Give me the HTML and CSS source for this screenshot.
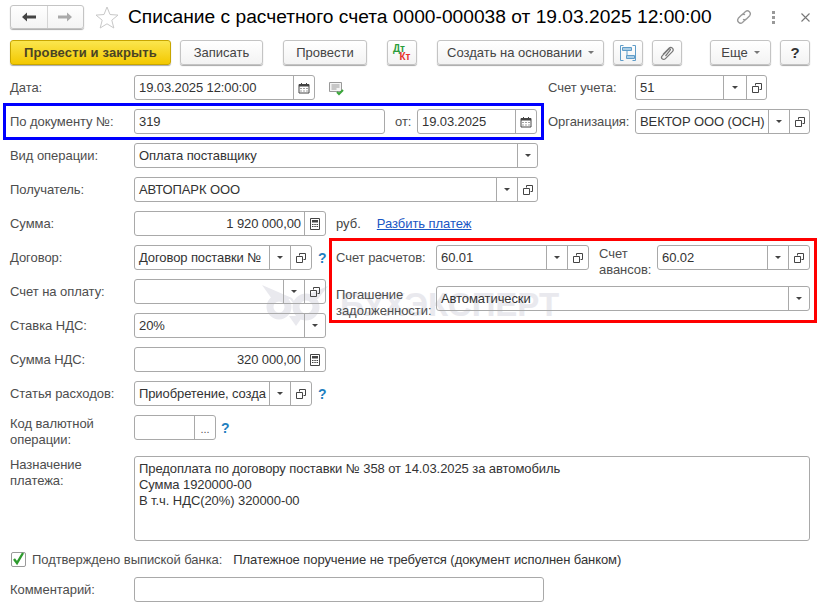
FILE: index.html
```html
<!DOCTYPE html>
<html lang="ru">
<head>
<meta charset="utf-8">
<title>Списание с расчетного счета</title>
<link rel="stylesheet" href="styles.css">
</head>
<body>
<svg class="defs" width="0" height="0" aria-hidden="true">
  <symbol id="open" viewBox="0 0 12 12"><path d="M4.500 3.500v-2h6v6h-2M1.500 4.500h6v6h-6z" fill="none" stroke="#444" stroke-width="1"/></symbol>
  <symbol id="cal" viewBox="0 0 12 12"><path d="M1 2.500h10v8.500H1z" fill="none" stroke="#444"/><path d="M1 2h10v2.500H1zM3 1h1v2H3zM8 1h1v2H8z" fill="#444"/><path d="M2.500 6h1v1h-1zM5.500 6h1v1h-1zM8.500 6h1v1h-1zM2.500 8.500h1v1h-1zM5.500 8.500h1v1h-1zM8.500 8.500h1v1h-1z" fill="#444"/></symbol>
  <symbol id="calc" viewBox="0 0 12 12"><path d="M1.500.5h9v11h-9z" fill="none" stroke="#444"/><path d="M3 2h6v2.500H3zM3 6h1.500v1H3zM5.300 6h1.500v1H5.300zM7.500 6H9v1H7.500zM3 8h1.500v1H3zM5.300 8h1.500v1H5.300zM7.500 8H9v1H7.500z" fill="#444"/></symbol>
</svg>
<div class="wm" aria-hidden="true">
  <svg width="68" height="41" viewBox="0 0 68 41"><g fill="none" stroke="#e9e9ee" stroke-width="7"><circle cx="17" cy="22" r="9"/><circle cx="44" cy="22" r="10"/></g><path d="M0 0l30 13 4 6 4-6L66 1 56 14H40l-6 8-6-8H10zM27 31h14l-7 10z" fill="#e9e9ee"/></svg>
  <span class="wm-t">БУХЭКСПЕРТ</span>
</div>
<main class="form">
  <header class="titlebar">
    <div class="nav">
      <button class="nav-b"><svg width="14" height="10" viewBox="0 0 14 10"><path d="M0 5l5-4.500V3.500h9v3H5v3z" fill="#444"/></svg></button>
      <button class="nav-b"><svg width="14" height="10" viewBox="0 0 14 10"><path d="M14 5L9 .5V3.500H0v3h9v3z" fill="#aaa"/></svg></button>
    </div>
    <svg class="star" width="24" height="23" viewBox="0 0 24 23"><path d="M12 1l3 7.500 8 .6-6.200 5.100 2 7.800L12 17.800 5.200 22l2-7.800L1 9.100l8-.6z" fill="#fff" stroke="#c8c8c8"/></svg>
    <h1 class="title">Списание с расчетного счета 0000-000038 от 19.03.2025 12:00:00</h1>
    <svg class="link" width="18" height="18" viewBox="0 0 18 18"><g fill="none" stroke="#999" stroke-width="1.300"><path d="M7.500 6.500l3-3a3 3 0 0 1 4.200 4.200l-3 3a3 3 0 0 1-3.700.5"/><path d="M10.500 11.500l-3 3a3 3 0 0 1-4.200-4.200l3-3a3 3 0 0 1 3.700-.5"/></g></svg>
    <div class="dots"><i></i><i></i><i></i></div>
    <svg class="close" width="9" height="9" viewBox="0 0 9 9"><path d="M.5.500l8 8M8.500.500l-8 8" stroke="#777" stroke-width="1.100"/></svg>
  </header>

  <nav class="toolbar">
    <button class="btn primary w161">Провести и закрыть</button>
    <button class="btn w83 m9">Записать</button>
    <button class="btn w84 m20">Провести</button>
    <button class="btn w30 m20 dtkt"><span class="dt">Дт</span><span class="kt">Кт</span></button>
    <button class="btn w167 m20">Создать на основании<span class="caret"></span></button>
    <button class="btn w30 m9"><svg width="16" height="16" viewBox="0 0 16 16"><g fill="none" stroke="#5f9cc8"><path d="M3.500 .5h-3v15h3M12.500 .5h3v15h-3"/><path d="M2.500 2.500h9v3h-9zM6.500 10.500h8v3h-8z" fill="#a9cde6"/><path d="M7 5.500v5"/></g></svg></button>
    <button class="btn w30 m9"><svg width="16" height="16" viewBox="0 0 16 16"><path d="M4 9.500l6-6.300a2.400 2.400 0 0 1 3.400 3.400l-7.200 7.200a1.500 1.500 0 0 1-3-3l6.700-6.800a.8.800 0 0 1 1.300 1.200L6.500 11" fill="none" stroke="#777" stroke-width="1.200"/></svg></button>
    <button class="btn w61 m28">Еще<span class="caret"></span></button>
    <button class="btn w30 m9 help">?</button>
  </nav>

  <section class="row">
    <label class="lbl">Дата:</label>
    <div class="field w181"><span class="val">19.03.2025 12:00:00</span><span class="tb"><svg width="12" height="12"><use href="#cal"/></svg></span></div>
    <svg class="note" width="16" height="14" viewBox="0 0 16 14"><path d="M.5.500h12v9H.5z" fill="#f4f4f4" stroke="#999"/><path d="M2.500 3h8M2.500 5h8M2.500 7h5" stroke="#999"/><path d="M8 10l2 2 4-4" fill="none" stroke="#3aa63a" stroke-width="2"/></svg>
    <label class="lbl right-lbl">Счет учета:</label>
    <div class="field w132"><span class="val">51</span><span class="tb w23"><span class="caret dark"></span></span><span class="tb w20"><svg width="12" height="12"><use href="#open"/></svg></span></div>
  </section>

  <section class="row">
    <div class="blue">
      <label class="lbl lbl-blue">По документу №:</label>
      <div class="field w251"><span class="val">319</span></div>
      <label class="lbl ot">от:</label>
      <div class="field w120"><span class="val">19.03.2025</span><span class="tb"><svg width="12" height="12"><use href="#cal"/></svg></span></div>
    </div>
    <label class="lbl org-lbl">Организация:</label>
    <div class="field w175"><span class="val">ВЕКТОР ООО (ОСН)</span><span class="tb w21"><span class="caret dark"></span></span><span class="tb w20"><svg width="12" height="12"><use href="#open"/></svg></span></div>
  </section>

  <section class="row">
    <label class="lbl">Вид операции:</label>
    <div class="field w404"><span class="val">Оплата поставщику</span><span class="tb w20"><span class="caret dark"></span></span></div>
  </section>

  <section class="row">
    <label class="lbl">Получатель:</label>
    <div class="field w404"><span class="val">АВТОПАРК ООО</span><span class="tb w21"><span class="caret dark"></span></span><span class="tb w20"><svg width="12" height="12"><use href="#open"/></svg></span></div>
  </section>

  <section class="row">
    <label class="lbl">Сумма:</label>
    <div class="field w192"><span class="val num">1 920 000,00</span><span class="tb w21"><svg width="12" height="12"><use href="#calc"/></svg></span></div>
    <span class="rub">руб.</span>
    <a class="link-text" href="#">Разбить платеж</a>
  </section>

  <div class="split">
    <div class="split-left">
      <section class="row">
        <label class="lbl">Договор:</label>
        <div class="field w178"><span class="val">Договор поставки №</span><span class="tb w21"><span class="caret dark"></span></span><span class="tb w21"><svg width="12" height="12"><use href="#open"/></svg></span></div>
        <span class="q">?</span>
      </section>
      <section class="row">
        <label class="lbl">Счет на оплату:</label>
        <div class="field w192"><span class="val"></span><span class="tb w21"><span class="caret dark"></span></span><span class="tb w21"><svg width="12" height="12"><use href="#open"/></svg></span></div>
      </section>
      <section class="row">
        <label class="lbl">Ставка НДС:</label>
        <div class="field w192"><span class="val">20%</span><span class="tb w21"><span class="caret dark"></span></span></div>
      </section>
    </div>
    <div class="red">
      <div class="red-row">
        <label class="lbl red-lbl">Счет расчетов:</label>
        <div class="field w153"><span class="val">60.01</span><span class="tb w21"><span class="caret dark"></span></span><span class="tb w21"><svg width="12" height="12"><use href="#open"/></svg></span></div>
        <label class="lbl two avans">Счет<br>авансов:</label>
        <div class="field w153"><span class="val">60.02</span><span class="tb w21"><span class="caret dark"></span></span><span class="tb w21"><svg width="12" height="12"><use href="#open"/></svg></span></div>
      </div>
      <div class="red-row second">
        <label class="lbl two red-lbl">Погашение<br>задолженности:</label>
        <div class="field w374"><span class="val">Автоматически</span><span class="tb w21"><span class="caret dark"></span></span></div>
      </div>
    </div>
  </div>

  <section class="row">
    <label class="lbl">Сумма НДС:</label>
    <div class="field w192"><span class="val num">320 000,00</span><span class="tb w21"><svg width="12" height="12"><use href="#calc"/></svg></span></div>
  </section>

  <section class="row">
    <label class="lbl">Статья расходов:</label>
    <div class="field w178"><span class="val">Приобретение, созда</span><span class="tb w21"><span class="caret dark"></span></span><span class="tb w21"><svg width="12" height="12"><use href="#open"/></svg></span></div>
    <span class="q">?</span>
  </section>

  <section class="row">
    <label class="lbl two">Код валютной<br>операции:</label>
    <div class="field w82"><span class="val"></span><span class="tb w21 ell">...</span></div>
    <span class="q q-code">?</span>
  </section>

  <section class="row memo-row">
    <label class="lbl two">Назначение<br>платежа:</label>
    <div class="memo">Предоплата по договору поставки № 358 от 14.03.2025 за автомобиль<br>Сумма 1920000-00<br>В т.ч. НДС(20%) 320000-00</div>
  </section>

  <section class="check-row">
    <span class="check"><svg width="15" height="15" viewBox="0 0 15 15"><path d="M3 7l3 4 6-10" fill="none" stroke="#2e9b2e" stroke-width="2.400"/></svg></span>
    <span class="lbl check-lbl">Подтверждено выпиской банка:</span>
    <span class="check-text">Платежное поручение не требуется (документ исполнен банком)</span>
  </section>

  <section class="row last">
    <label class="lbl">Комментарий:</label>
    <div class="field w410"></div>
  </section>
</main>
</body>
</html>
```
FILE: styles.css
```css
* { box-sizing: border-box; }
html, body { margin: 0; padding: 0; }
body { width: 819px; height: 607px; background: #fff; overflow: hidden; position: relative; font: 13px/16px "Liberation Sans", Arial, sans-serif; color: #333; }
.defs { position: absolute; }
.form { position: relative; z-index: 1; padding: 5px 9px 0 10px; }

.titlebar { display: flex; align-items: center; height: 24px; }
.nav { display: flex; width: 74px; height: 24px; border: 1px solid #c4c4c4; border-radius: 3px; background: linear-gradient(#fff, #f4f4f4); box-shadow: 0 1px 1px #aaa; }
.nav-b { flex: 1; border: 0; background: none; padding: 0; display: flex; align-items: center; justify-content: center; }
.nav-b + .nav-b { border-left: 1px solid #d5d5d5; }
.star { margin-left: 11px; }
.title { margin: 0 0 0 9px; font: 400 19.2px/24px "Liberation Sans", Arial, sans-serif; color: #000; white-space: nowrap; width: 598px; }
.link { margin-left: 9px; }
.dots { display: flex; flex-direction: column; gap: 2px; margin-left: 19px; }
.dots i { width: 3px; height: 3px; background: #999; display: block; }
.close { margin-left: 26px; }

.toolbar { display: flex; margin-top: 11px; height: 25px; }
.btn { height: 25px; border: 1px solid #c4c4c4; border-radius: 3px; background: linear-gradient(#fff, #f3f3f3); box-shadow: 0 1px 1px #a8a8a8; font: 13px "Liberation Sans", Arial, sans-serif; color: #444; padding: 0; display: flex; align-items: center; justify-content: center; }
.primary { background: linear-gradient(#fbe64e, #f3c800); border-color: #c8a600; font-weight: 700; color: #4a4324; letter-spacing: .15px; }
.w161 { width: 161px; } .w83 { width: 83px; } .w84 { width: 84px; } .w30 { width: 30px; } .w167 { width: 167px; } .w61 { width: 61px; }
.m9 { margin-left: 9px; } .m20 { margin-left: 20px; } .m28 { margin-left: 28px; }
.help { font-weight: 700; font-size: 15px; color: #333; }
.dtkt { flex-direction: column; font-size: 10px; line-height: 8px; font-weight: 700; }
.dt { color: #2a9d3a; margin-left: -6px; }
.kt { color: #e5332a; margin-left: 6px; }
.caret { display: inline-block; width: 0; height: 0; margin-left: 6px; border-left: 3.500px solid transparent; border-right: 3.500px solid transparent; border-top: 3.500px solid #777; }
.caret.dark { margin: 0; border-top-color: #444; }

.row { display: flex; align-items: center; height: 25px; margin-top: 9px; position: relative; }
.toolbar + .row { margin-top: 10px; }
.lbl { width: 124px; flex: none; color: #4d4d4d; white-space: nowrap; padding-top: 1px; letter-spacing: -.05px; }
.two { margin-top: 8px; }
.field { display: flex; height: 25px; flex: none; border: 1px solid #a9a9a9; border-radius: 3px; overflow: hidden; }
.val { flex: 1; min-width: 0; padding: 1px 3px 0 4px; line-height: 22px; color: #333; white-space: nowrap; overflow: hidden; letter-spacing: -.1px; }
.num { text-align: right; }
.tb { flex: none; width: 21px; border-left: 1px solid #a9a9a9; display: flex; align-items: center; justify-content: center; }
.w20 { width: 20px; } .w21 { width: 21px; } .w23 { width: 23px; }
.ell { color: #555; align-items: flex-end; padding-bottom: 5px; line-height: 10px; font-size: 11px; }
.w181 { width: 181px; } .w132 { width: 132px; } .w251 { width: 251px; } .w120 { width: 120px; } .w175 { width: 175px; } .w404 { width: 404px; } .w192 { width: 192px; } .w178 { width: 178px; } .w82 { width: 82px; } .w153 { width: 153px; } .w374 { width: 374px; } .w410 { width: 410px; }
.note { margin-left: 14px; margin-top: 2px; }
.right-lbl { width: 87px; margin-left: 203px; }
.blue { display: flex; align-items: center; margin: -6px 0 -6px -7px; padding: 0 4px; width: 541px; height: 37px; border: 3px solid #0000ff; flex: none; }
.lbl-blue { width: 124px; }
.ot { width: 22px; margin-left: 10px; }
.org-lbl { width: 87px; margin-left: 4px; }
.rub { margin-left: 10px; color: #444; padding-top: 1px; }
.link-text { margin-left: 16px; color: #1a56c4; text-decoration: underline; padding-top: 1px; letter-spacing: -.05px; }
.q { margin-left: 6px; color: #1f7fc0; font-weight: 700; font-size: 14px; width: 8px; }
.q-code { margin-left: 5px; }

.split { display: flex; }
.split-left { width: 319px; flex: none; }
.red { width: 488px; height: 85px; margin-top: 2px; border: 3px solid #f00; padding: 4px 4px 0; flex: none; }
.red-row { display: flex; align-items: center; height: 25px; }
.second { margin-top: 16px; }
.red-lbl { width: 100px; }
.avans { width: 58px; margin-left: 10px; }

.memo-row { height: 85px; align-items: flex-start; margin-top: 16px; }
.memo-row .two { margin-top: 0; }
.memo { width: 676px; height: 85px; border: 1px solid #a9a9a9; border-radius: 3px; padding: 4px; line-height: 16px; color: #333; letter-spacing: -.08px; white-space: nowrap; }
.check-row { display: flex; align-items: center; height: 16px; margin-top: 10px; }
.check { width: 15px; height: 15px; border: 1px solid #999; border-radius: 2px; display: block; flex: none; margin-left: 1px; }
.check svg { display: block; margin: -1px; }
.check-lbl { width: auto; margin-left: 6px; letter-spacing: -.06px; }
.check-text { margin-left: 11px; color: #333; letter-spacing: -.07px; padding-top: 1px; }
.last { margin-top: 10px; }

.wm { position: absolute; left: 262px; top: 285px; display: flex; align-items: flex-start; z-index: 0; }
.wm-t { font: 700 33px/40px "Liberation Sans", Arial, sans-serif; color: #e9e9ee; margin-left: 10px; }
```
